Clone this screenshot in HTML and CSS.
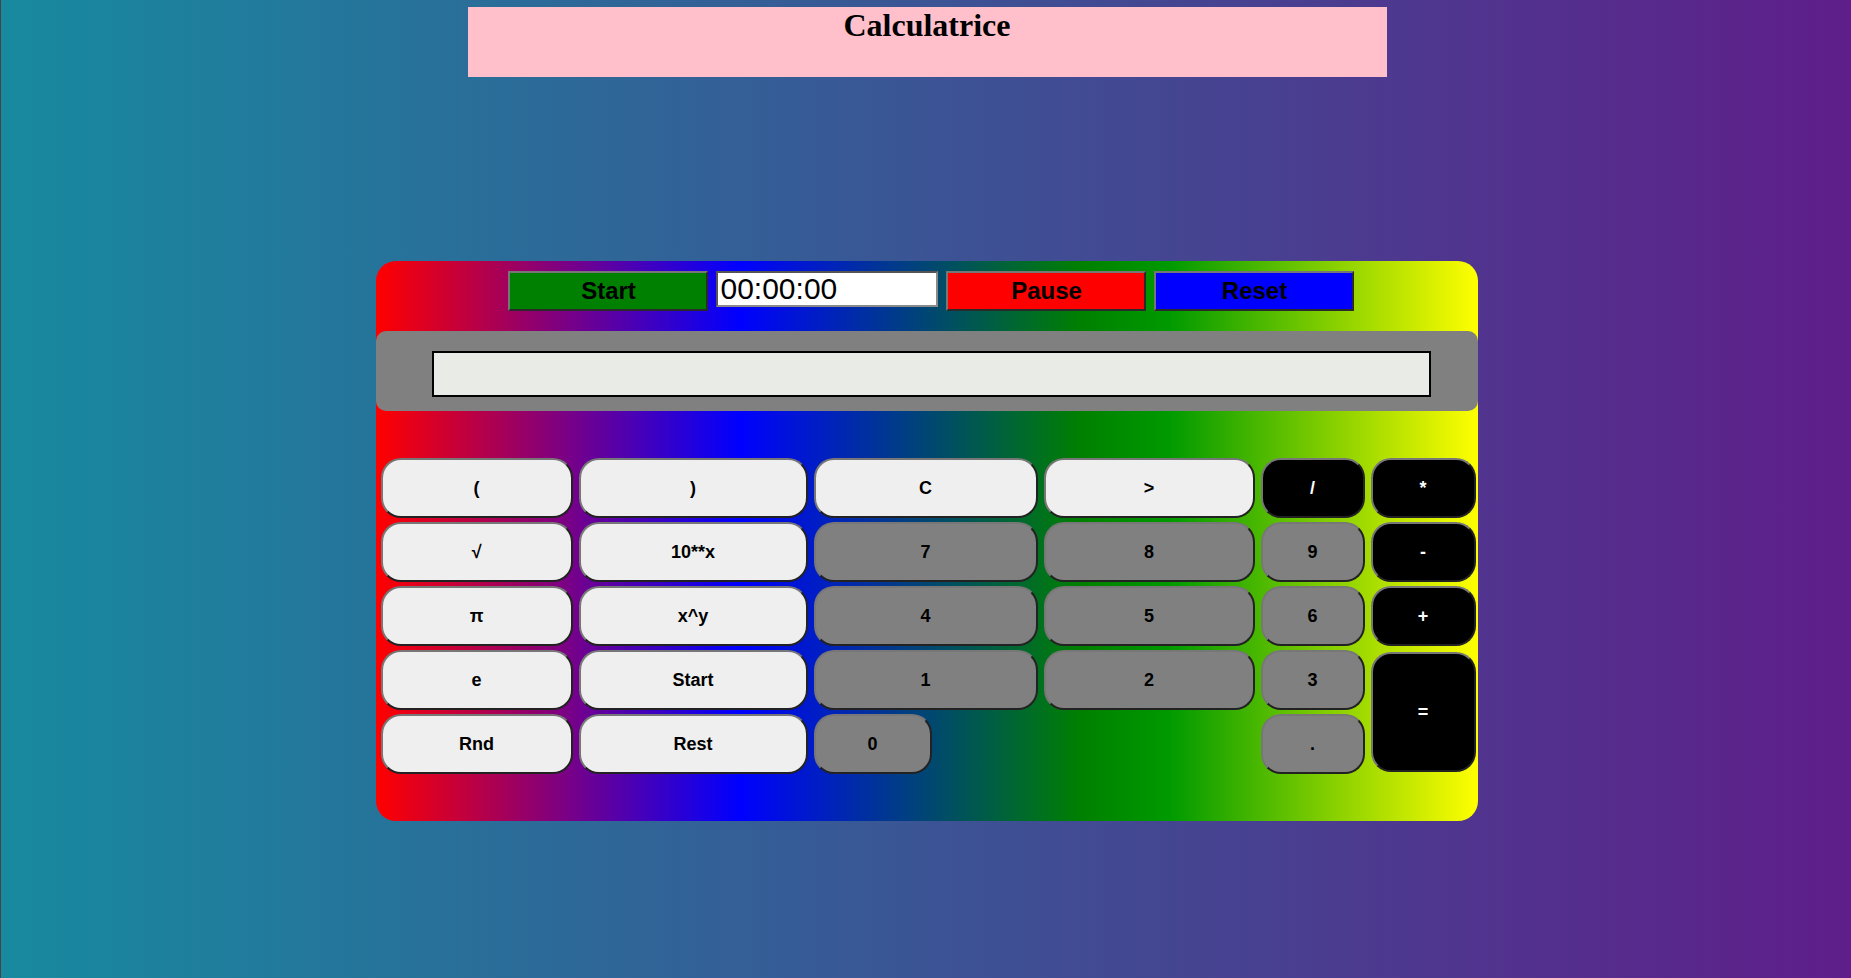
FILE: index.html
```html
<!DOCTYPE html>
<html lang="fr">
<head>
<meta charset="utf-8">
<title>Calculatrice</title>
<link rel="stylesheet" href="styles.css">
</head>
<body>
<div class="page">
  <header class="title-bar">
    <h1 class="title">Calculatrice</h1>
  </header>
  <main class="calc">
    <div class="timer-row">
      <button class="tbtn tbtn-start">Start</button>
      <input class="timer" type="text" value="00:00:00">
      <button class="tbtn tbtn-pause">Pause</button>
      <button class="tbtn tbtn-reset">Reset</button>
    </div>
    <div class="screen">
      <input class="screen-input" type="text" value="">
    </div>
    <div class="keys">
      <button class="key light">(</button>
      <button class="key light">)</button>
      <button class="key light">C</button>
      <button class="key light">&gt;</button>
      <button class="key dark">/</button>
      <button class="key dark">*</button>

      <button class="key light">√</button>
      <button class="key light">10**x</button>
      <button class="key gray">7</button>
      <button class="key gray">8</button>
      <button class="key gray">9</button>
      <button class="key dark">-</button>

      <button class="key light">π</button>
      <button class="key light">x^y</button>
      <button class="key gray">4</button>
      <button class="key gray">5</button>
      <button class="key gray">6</button>
      <button class="key dark">+</button>

      <button class="key light">e</button>
      <button class="key light">Start</button>
      <button class="key gray">1</button>
      <button class="key gray">2</button>
      <button class="key gray">3</button>
      <button class="key dark key-equal">=</button>

      <button class="key light">Rnd</button>
      <button class="key light">Rest</button>
      <button class="key gray key-zero">0</button>
      <button class="key gray key-dot">.</button>
    </div>
  </main>
</div>
</body>
</html>
```

FILE: styles.css
```css
html, body {
  margin: 0;
  padding: 0;
}

html {
  height: 100%;
}

body {
  min-height: 100vh;
  box-sizing: border-box;
  border-left: 1px solid #444444;
  background: linear-gradient(to right, #178a9f, #5f1e8a);
  font-family: "Liberation Sans", Arial, sans-serif;
  overflow: hidden;
}

.page {
  padding: 7px 5px 0 7px;
}

.title-bar {
  width: 50%;
  height: 70px;
  margin: 0 auto;
  background: #ffc0cb;
}

.title {
  margin: 0;
  font-family: "Liberation Serif", "Times New Roman", serif;
  font-size: 32px;
  font-weight: bold;
  text-align: center;
  color: #000;
}

.calc {
  width: 60%;
  height: 560px;
  box-sizing: border-box;
  margin: 184px auto 0;
  padding-top: 10px;
  border-radius: 20px;
  background: linear-gradient(to right, #ff0000 0%, #0000ff 33%, #008000 64%, #009a00 72%, #ffff00 100%);
}

.timer-row {
  display: flex;
  justify-content: center;
  align-items: flex-start;
  gap: 8px;
  padding-left: 9px;
}

.tbtn {
  width: 200px;
  height: 40px;
  box-sizing: border-box;
  margin: 0;
  padding: 0;
  border: 2px solid;
  border-color: #767676 #2a2a2a #2a2a2a #767676;
  font-family: "Liberation Sans", Arial, sans-serif;
  font-size: 24px;
  font-weight: bold;
  color: #000;
}

.tbtn-start { background: #008000; }
.tbtn-pause { background: #ff0000; }
.tbtn-reset { background: #0000ff; }

.timer {
  width: 222px;
  height: 36px;
  box-sizing: border-box;
  margin: 0;
  padding: 0 2px;
  border: 2px solid;
  border-color: #555555 #8a8a8a #8a8a8a #555555;
  background: #ffffff;
  font-family: "Liberation Sans", Arial, sans-serif;
  font-size: 30px;
  color: #000;
}

.screen {
  height: 80px;
  box-sizing: border-box;
  margin-top: 20px;
  padding: 20px 0 0 56px;
  border-radius: 10px;
  background: #808080;
}

.screen-input {
  display: block;
  width: 999px;
  height: 46px;
  box-sizing: border-box;
  margin: 0;
  border: 2px solid #000;
  background: #e9ebe6;
  font-family: "Liberation Sans", Arial, sans-serif;
  font-size: 24px;
}

.keys {
  display: grid;
  grid-template-columns: 192px 229px 224px 211px 104px 105px;
  grid-auto-rows: 60px;
  column-gap: 6px;
  row-gap: 4px;
  margin: 47px 0 0 5px;
}

.key {
  margin: 0;
  padding: 0;
  border: 2px solid;
  border-color: #777777 #222222 #222222 #777777;
  border-radius: 20px;
  font-family: "Liberation Sans", Arial, sans-serif;
  font-size: 18px;
  font-weight: bold;
}

.light {
  background: #efefef;
  color: #000;
}

.gray {
  background: #808080;
  color: #000;
}

.dark {
  background: #000000;
  color: #ffffff;
}

.key-equal {
  grid-column: 6;
  grid-row: 4 / span 2;
  margin: 2px 0;
}

.key-zero {
  grid-column: 3;
  grid-row: 5;
  width: 118px;
  justify-self: start;
}

.key-dot {
  grid-column: 5;
  grid-row: 5;
}
```
